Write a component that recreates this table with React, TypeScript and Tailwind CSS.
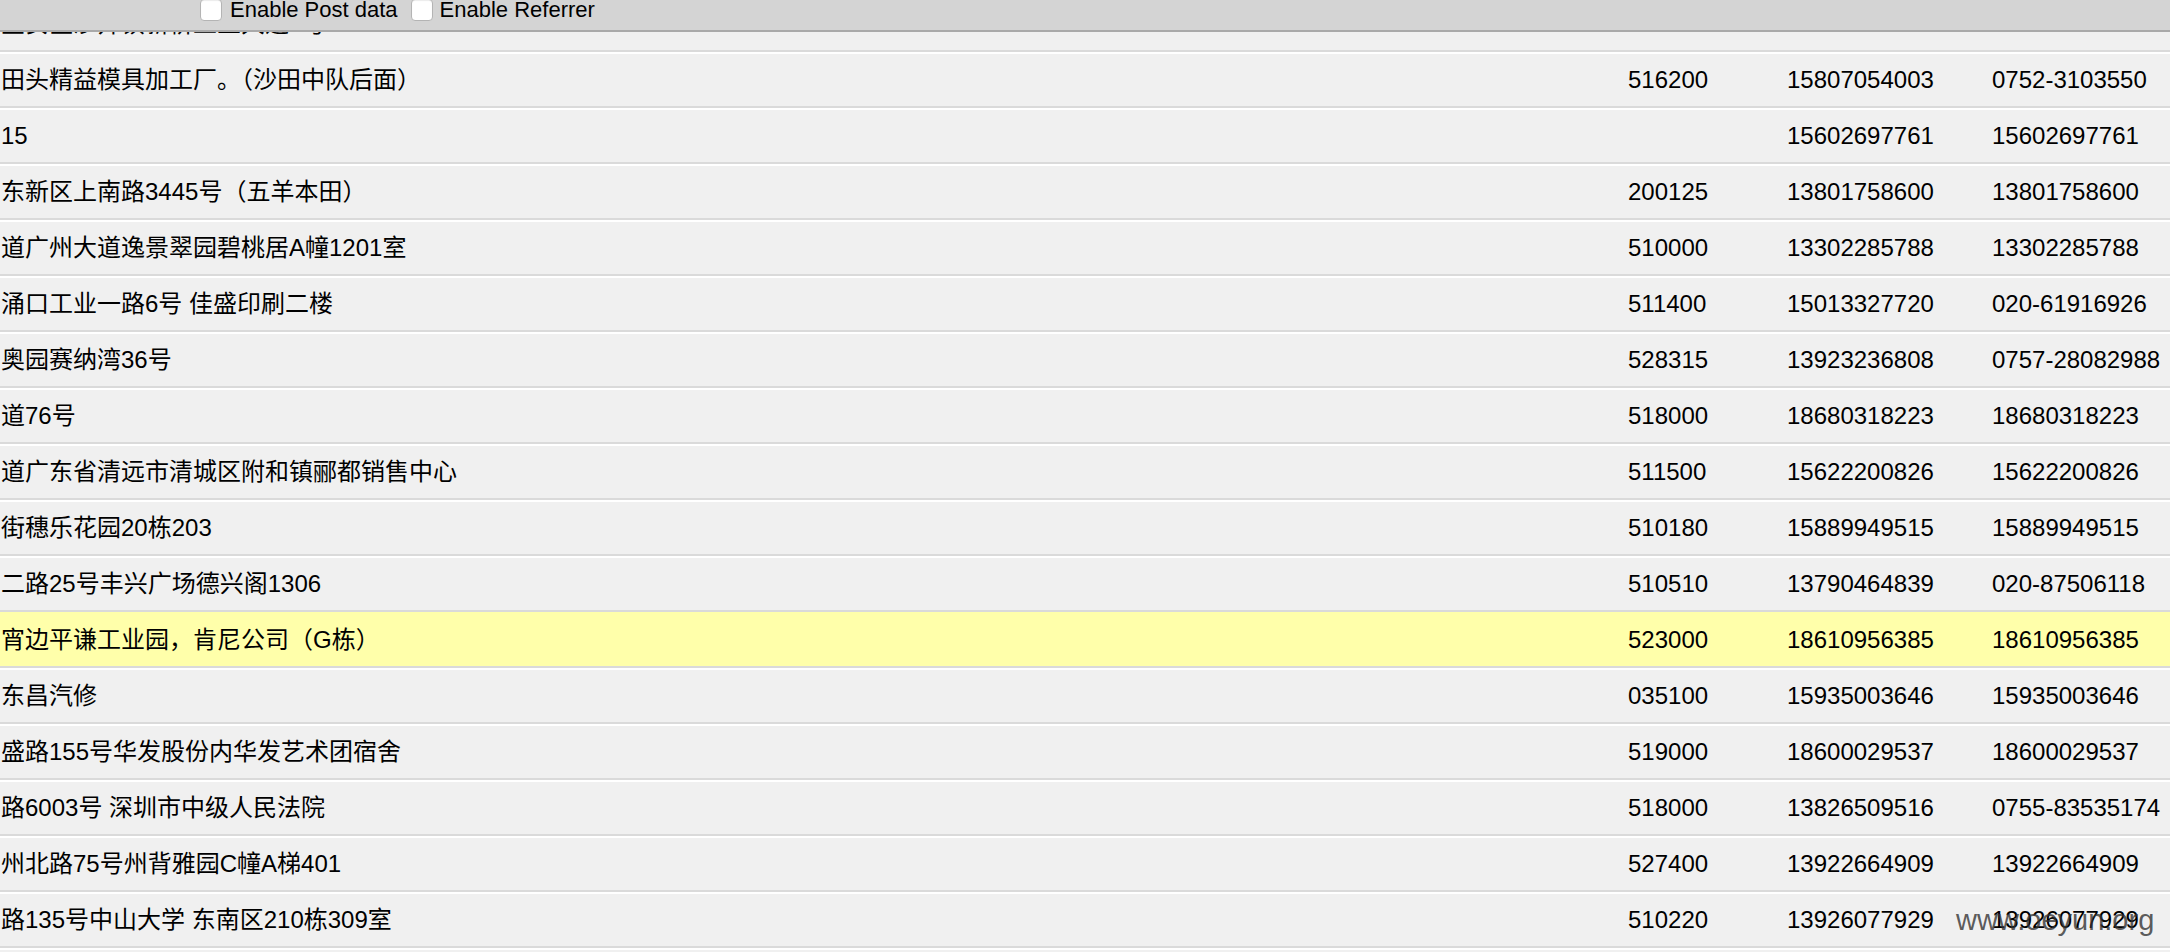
import React from 'react';

type Row = {
  addr: string;
  zip: string;
  phone: string;
  tel: string;
  hot?: boolean;
};

const rows: Row[] = [
  { addr: '宝安区沙井镇新桥工业大道8号', zip: '518000', phone: '13826501188', tel: '13826501188' },
  { addr: '田头精益模具加工厂。（沙田中队后面）', zip: '516200', phone: '15807054003', tel: '0752-3103550' },
  { addr: '15', zip: '', phone: '15602697761', tel: '15602697761' },
  { addr: '东新区上南路3445号（五羊本田）', zip: '200125', phone: '13801758600', tel: '13801758600' },
  { addr: '道广州大道逸景翠园碧桃居A幢1201室', zip: '510000', phone: '13302285788', tel: '13302285788' },
  { addr: '涌口工业一路6号 佳盛印刷二楼', zip: '511400', phone: '15013327720', tel: '020-61916926' },
  { addr: '奥园赛纳湾36号', zip: '528315', phone: '13923236808', tel: '0757-28082988' },
  { addr: '道76号', zip: '518000', phone: '18680318223', tel: '18680318223' },
  { addr: '道广东省清远市清城区附和镇郦都销售中心', zip: '511500', phone: '15622200826', tel: '15622200826' },
  { addr: '街穗乐花园20栋203', zip: '510180', phone: '15889949515', tel: '15889949515' },
  { addr: '二路25号丰兴广场德兴阁1306', zip: '510510', phone: '13790464839', tel: '020-87506118' },
  { addr: '宵边平谦工业园，肯尼公司（G栋）', zip: '523000', phone: '18610956385', tel: '18610956385', hot: true },
  { addr: '东昌汽修', zip: '035100', phone: '15935003646', tel: '15935003646' },
  { addr: '盛路155号华发股份内华发艺术团宿舍', zip: '519000', phone: '18600029537', tel: '18600029537' },
  { addr: '路6003号 深圳市中级人民法院', zip: '518000', phone: '13826509516', tel: '0755-83535174' },
  { addr: '州北路75号州背雅园C幢A梯401', zip: '527400', phone: '13922664909', tel: '13922664909' },
  { addr: '路135号中山大学 东南区210栋309室', zip: '510220', phone: '13926077929', tel: '13926077929' },
  { addr: '', zip: '', phone: '', tel: '' },
];

const Checkbox: React.FC = () => (
  <span className="block w-[22px] h-[22px] rounded-[4px] border border-[#b4b4b4] bg-white shadow-[inset_0_1px_1px_rgba(0,0,0,0.08)]" />
);

export default function App() {
  return (
    <div className="relative h-[952px] overflow-hidden bg-[#f0f0f0] text-black font-['Liberation_Sans','Noto_Sans_CJK_SC',sans-serif]">
      {/* toolbar sits on top of the scrolled table */}
      <div className="absolute top-0 left-0 right-0 z-10 h-[32px] bg-[#d4d4d4] border-b-2 border-[#a9a9a9]">
        <div className="flex items-center h-[22px] -mt-[1px] pl-[200px] text-[22px] leading-[22px]">
          <label className="flex items-center gap-[8px]">
            <Checkbox />
            <span>Enable Post data</span>
          </label>
          <label className="flex items-center gap-[7px] ml-[13px]">
            <Checkbox />
            <span>Enable Referrer</span>
          </label>
        </div>
      </div>

      <div className="-mt-[4px]">
        {rows.map((r, i) => (
          <div
            key={i}
            className={
              r.hot
                ? 'grid grid-cols-[1628px_159px_205px_1fr] items-center h-[56px] border-t-2 border-t-[#ffffaa] border-b-2 border-b-[#dadada] bg-[#ffffaa] text-[24px] leading-none'
                : 'grid grid-cols-[1628px_159px_205px_1fr] items-center h-[56px] border-t-2 border-t-white border-b-2 border-b-[#dadada] bg-[#f0f0f0] text-[24px] leading-none'
            }
          >
            <div className="pl-[1px] whitespace-nowrap">{r.addr}</div>
            <div>{r.zip}</div>
            <div>{r.phone}</div>
            <div>{r.tel}</div>
          </div>
        ))}
      </div>

      <div className="absolute left-[1956px] top-[906px] text-[29px] leading-none text-[#333333]/80 font-['Liberation_Sans',sans-serif]">
        www.oeyun.org
      </div>
    </div>
  );
}
